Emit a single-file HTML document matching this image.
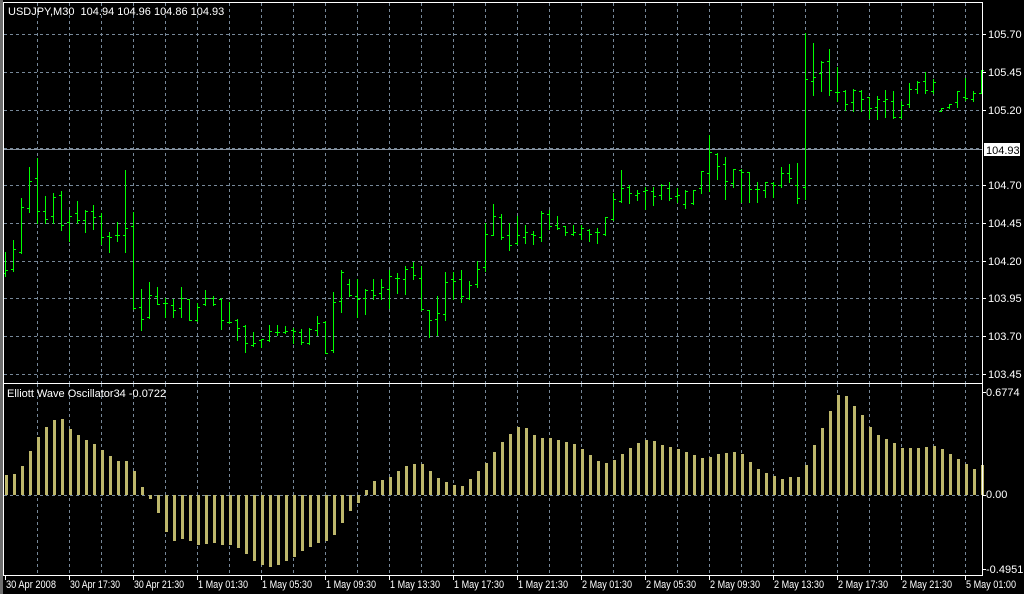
<!DOCTYPE html>
<html><head><meta charset="utf-8"><style>
html,body{margin:0;padding:0;background:#000;width:1024px;height:594px;overflow:hidden}
svg{display:block}
text{font-family:"Liberation Sans",sans-serif;font-size:11px;fill:#fff;white-space:pre}
</style></head><body>
<svg id="s" width="1024" height="594" xmlns="http://www.w3.org/2000/svg" shape-rendering="crispEdges">
<rect x="0" y="0" width="1024" height="594" fill="#000"/>
<rect x="0" y="0" width="3" height="594" fill="#6e6e6e"/>
<g id="grid" stroke="#778899" stroke-width="1" stroke-dasharray="3,3"></g>
<line x1="4" y1="149.5" x2="982" y2="149.5" stroke="#8a96a3"/>
<g id="bars" stroke="#00ff00" stroke-width="1"></g>
<g id="osc" fill="#bdb76b"></g>
<g stroke="#fff" stroke-width="1">
<line x1="3.5" y1="2" x2="3.5" y2="575"/>
<line x1="3" y1="2.5" x2="983" y2="2.5"/>
<line x1="982.5" y1="2" x2="982.5" y2="575"/>
<line x1="3" y1="383.5" x2="983" y2="383.5"/>
<line x1="3" y1="575.5" x2="983" y2="575.5"/>
</g>
<g id="ticks" stroke="#fff"></g>
<text x="8" y="15" xml:space="preserve">USDJPY,M30  104.94 104.96 104.86 104.93</text>
<text x="7" y="397">Elliott Wave Oscillator34 -0.0722</text>
<text x="988" y="38">105.70</text>
<text x="988" y="76">105.45</text>
<text x="988" y="114">105.20</text>
<text x="988" y="189">104.70</text>
<text x="988" y="227">104.45</text>
<text x="988" y="265">104.20</text>
<text x="988" y="302">103.95</text>
<text x="988" y="340">103.70</text>
<text x="988" y="378">103.45</text>
<rect x="984" y="143" width="36" height="13" fill="#fff"/>
<text x="986" y="154" style="fill:#000">104.93</text>
<text x="986" y="396">0.6774</text>
<text x="986" y="498">0.00</text>
<text x="986" y="573">-0.4951</text>
<g id="tl"></g>
</svg>
<script>
var NS="http://www.w3.org/2000/svg";
function el(p,t,a,txt){var e=document.createElementNS(NS,t);for(var k in a)e.setAttribute(k,a[k]);if(txt)e.textContent=txt;document.getElementById(p).appendChild(e);}
for(var k=0;k<30;k++){var x=37+32*k+0.5;el("grid","line",{x1:x,y1:3,x2:x,y2:383});el("grid","line",{x1:x,y1:384,x2:x,y2:575});}
[34,72,110,148,185,223,261,298,336,374].forEach(function(y){el("grid","line",{x1:4,y1:y+0.5,x2:982,y2:y+0.5});});
el("grid","line",{x1:4,y1:495.5,x2:982,y2:495.5});
[34,72,110,185,223,261,298,336,374,392,495,569].forEach(function(y){el("ticks","line",{x1:983,y1:y+0.5,x2:986,y2:y+0.5});});
var B=[[252,276,273,270],[240,271,269,249],[198,253,252,207],[167,212,208,181],[158,223,178,211],[196,223,211,219],[193,223,216,197],[191,230,195,225],[210,241,222,216],[201,223,213,220],[210,232,220,211],[205,229,211,217],[213,244,216,237],[232,252,236,237],[222,241,235,235],[170,252,235,228],[212,309,226,308],[289,330,307,319],[282,318,317,295],[287,304,296,304],[298,317,303,303],[299,317,305,310],[287,317,308,298],[299,320,299,320],[303,321,320,307],[290,305,304,298],[296,305,298,304],[298,329,299,320],[302,323,322,322],[319,340,320,328],[325,352,326,343],[332,346,345,343],[339,347,340,339],[325,341,340,331],[325,335,332,332],[326,333,332,331],[328,343,330,331],[329,344,332,342],[328,344,343,329],[316,335,330,323],[321,353,322,353],[292,352,350,302],
[270,312,301,272],[279,296,284,295],[279,317,296,299],[289,314,298,290],[279,299,290,295],[279,299,293,287],[270,308,289,276],[273,293,278,278],[266,294,279,269],[262,279,267,275],[266,310,278,309],[310,337,310,320],[296,335,319,313],[272,320,314,282],[272,299,279,281],[270,302,279,296],[281,299,298,285],[261,287,284,269],[223,271,267,234],[204,235,235,216],[214,239,217,237],[223,250,235,245],[216,244,243,235],[225,243,237,232],[231,244,234,235],[211,241,237,213],[210,229,214,226],[216,229,225,228],[226,235,226,232],[225,235,234,232],[225,239,234,228],[229,241,230,234],[228,243,232,232],[217,235,234,217],[193,220,219,199],[170,202,201,188],[185,203,187,193],[190,200,195,193],[187,209,191,190],[187,205,191,196],
[184,199,195,185],[182,200,188,198],[188,202,196,195],[190,208,204,191],[190,204,203,190],[171,193,188,171],[135,191,173,152],[153,179,154,166],[157,199,164,181],[169,187,183,169],[169,202,170,172],[172,202,172,189],[182,202,189,189],[182,197,190,182],[182,197,183,185],[167,187,185,173],[164,182,173,178],[163,203,185,198],[33,199,187,79],[43,95,81,77],[61,91,73,62],[49,95,61,90],[67,101,92,92],[90,110,91,104],[89,111,102,90],[90,111,91,99],[97,118,97,108],[96,119,107,99],[90,117,101,99],[91,118,101,117],[101,118,117,105],[83,107,104,89],[81,93,89,82],[72,93,81,90],[79,93,91,82],[108,111,111,108],[104,108,107,104],[91,107,102,91],[78,100,97,98],[91,101,99,93],[70,93,93,70]];
B.forEach(function(b,i){var x=5+8*i+0.5;
el("bars","line",{x1:x,y1:b[0],x2:x,y2:b[1]+1});
el("bars","line",{x1:x-2.5,y1:b[2]+0.5,x2:x,y2:b[2]+0.5});
el("bars","line",{x1:x,y1:b[3]+0.5,x2:x+2.5,y2:b[3]+0.5});});
var O=[475,474,466,451,437,427,420,419,429,435,440,444,450,456,461,461,471,487,499,513,532,541,539,541,545,544,543,545,545,548,554,561,565,567,565,561,557,551,547,543,541,535,523,511,503,490,481,480,477,471,466,464,464,471,478,482,485,486,479,471,463,452,442,434,427,428,435,438,438,440,442,444,449,455,461,463,460,454,448,443,440,441,445,447,449,452,455,458,457,454,453,452,454,462,469,473,476,479,477,477,465,445,428,411,395,396,406,415,427,435,439,443,448,448,448,447,446,449,454,459,464,469,465];
O.forEach(function(v,i){var x=5+8*i;var y0=Math.min(v,495),h=Math.abs(495-v);el("osc","rect",{x:x,y:y0,width:3,height:h});});
var T=["30 Apr 2008","30 Apr 17:30","30 Apr 21:30","1 May 01:30","1 May 05:30","1 May 09:30","1 May 13:30","1 May 17:30","1 May 21:30","2 May 01:30","2 May 05:30","2 May 09:30","2 May 13:30","2 May 17:30","2 May 21:30","5 May 01:00"];
T.forEach(function(t,i){var x=5+64*i;el("tl","line",{x1:x+0.5,y1:576,x2:x+0.5,y2:580,stroke:"#fff"});el("tl","text",{x:x+1,y:588,textLength:50,lengthAdjust:"spacingAndGlyphs"},t);});
</script>
</body></html>
